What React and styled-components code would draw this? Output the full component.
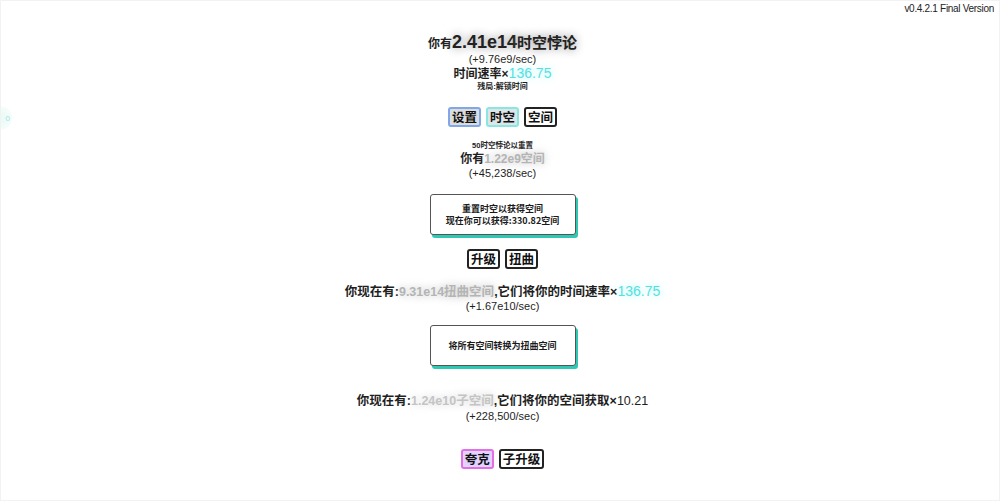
import React from "react";
import styled, { createGlobalStyle } from "styled-components";

const Global = createGlobalStyle`
  html, body { margin: 0; padding: 0; background: #fff; }
  body {
    font-family: "Liberation Sans", "Noto Sans CJK SC", sans-serif;
    color: #1e1e1e;
    overflow: hidden;
  }
`;

const Page = styled.div`
  position: relative;
  width: 1000px;
  height: 501px;
  box-sizing: border-box;
  border: 1px solid #f2f2f2;
  overflow: hidden;
`;

const Version = styled.div`
  position: absolute;
  top: 2px;
  right: 5px;
  font-size: 10px;
  letter-spacing: -0.3px;
  color: #222;
`;

const SideNode = styled.div`
  position: absolute;
  left: -13px;
  top: 105px;
  width: 24px;
  height: 24px;
  border-radius: 50%;
  background: radial-gradient(circle, #ecfbf8 30%, #f6fdfc 70%, #fff 100%);
  color: #9fe6dc;
  font-size: 8px;
  display: flex;
  align-items: center;
  justify-content: flex-end;
  padding-right: 2px;
  box-sizing: border-box;
`;

const Column = styled.main`
  display: flex;
  flex-direction: column;
  align-items: center;
  padding: 31px 0 0 5px;
`;

const Line = styled.div`
  height: ${(p) => p.$h || 14}px;
  line-height: ${(p) => p.$h || 14}px;
  margin-top: ${(p) => p.$mt || 0}px;
  font-size: ${(p) => p.$size || 12}px;
  font-weight: ${(p) => (p.$bold ? 700 : 400)};
  white-space: nowrap;
  display: flex;
  align-items: baseline;
  justify-content: center;
`;

const Big = styled.span`
  font-size: ${(p) => p.$size || 18}px;
  font-weight: 700;
  color: ${(p) => p.$color || "#222"};
  text-shadow: 0 0 10px ${(p) => p.$glow || "#888"};
`;

const Cjk = styled.span`
  font-size: ${(p) => p.$size || 15}px;
`;

const Accent = styled.span`
  font-size: ${(p) => p.$size || 14}px;
  font-weight: 400;
  color: #52e2e2;
  text-shadow: 0 0 8px #9ff2f0;
`;

const Plain = styled.span`
  font-weight: 400;
`;

const Tabs = styled.div`
  display: flex;
  gap: 5px;
  margin-top: ${(p) => p.$mt || 0}px;
`;

const Tab = styled.button`
  height: 20px;
  padding: 0 2px;
  font-family: "Noto Sans CJK SC", sans-serif;
  font-weight: 700;
  font-size: 12.5px;
  line-height: 16px;
  color: #111;
  background: ${(p) => p.$bg || "#fff"};
  border: 2px solid ${(p) => p.$border || "#222"};
  border-radius: 3px;
  box-sizing: border-box;
  cursor: pointer;
`;

const ActionButton = styled.button`
  width: 146px;
  height: 41px;
  margin-top: ${(p) => p.$mt || 0}px;
  background: #fff;
  border: 1px solid #555;
  border-radius: 3px;
  box-shadow: 2px 3px 0 #2ec8b4;
  font-family: "Noto Sans CJK SC", sans-serif;
  font-size: 9px;
  font-weight: 700;
  line-height: 12px;
  color: #1a1a1a;
  display: flex;
  flex-direction: column;
  align-items: center;
  justify-content: center;
  padding: 0;
`;

export default function App() {
  return (
    <>
      <Global />
      <Page>
        <Version>v0.4.2.1 Final Version</Version>
        <SideNode>0</SideNode>
        <Column>
          <Line $h={20} $size={12} $bold>
            你有
            <Big $size={18}>
              2.41e14<Cjk $size={15}>时空悖论</Cjk>
            </Big>
          </Line>
          <Line $h={14} $size={11}>(+9.76e9/sec)</Line>
          <Line $h={14} $size={12} $bold>
            时间速率×<Accent $size={14}>136.75</Accent>
          </Line>
          <Line $h={14} $size={8} $bold>残局:解锁时间</Line>

          <Tabs $mt={13}>
            <Tab $bg="#dcdcdc" $border="#7fa8ea">设置</Tab>
            <Tab $bg="#dde6e6" $border="#8ae6e2">时空</Tab>
            <Tab>空间</Tab>
          </Tabs>

          <Line $mt={13} $h={12} $size={7.5} $bold>50时空悖论以重置</Line>
          <Line $h={14} $size={12} $bold>
            你有
            <Big $size={12} $color="#b4b4b4" $glow="#bbb">1.22e9空间</Big>
          </Line>
          <Line $h={14} $size={11}>(+45,238/sec)</Line>

          <ActionButton $mt={14}>
            <span>重置时空以获得空间</span>
            <span>现在你可以获得:330.82空间</span>
          </ActionButton>

          <Tabs $mt={14}>
            <Tab>升级</Tab>
            <Tab>扭曲</Tab>
          </Tabs>

          <Line $mt={14} $h={16} $size={12.5} $bold>
            你现在有:
            <Big $size={12.5} $color="#b4b4b4" $glow="#bbb">9.31e14扭曲空间</Big>
            ,它们将你的时间速率×<Accent $size={14}>136.75</Accent>
          </Line>
          <Line $h={14} $size={11}>(+1.67e10/sec)</Line>

          <ActionButton $mt={12}>
            <span>将所有空间转换为扭曲空间</span>
          </ActionButton>

          <Line $mt={27} $h={16} $size={12.5} $bold>
            你现在有:
            <Big $size={12.5} $color="#c4c4c4" $glow="#ccc">1.24e10子空间</Big>
            ,它们将你的空间获取×<Plain>10.21</Plain>
          </Line>
          <Line $h={14} $size={11}>(+228,500/sec)</Line>

          <Tabs $mt={26}>
            <Tab $bg="#e2d2ff" $border="#e46ee4">夸克</Tab>
            <Tab>子升级</Tab>
          </Tabs>
        </Column>
      </Page>
    </>
  );
}
